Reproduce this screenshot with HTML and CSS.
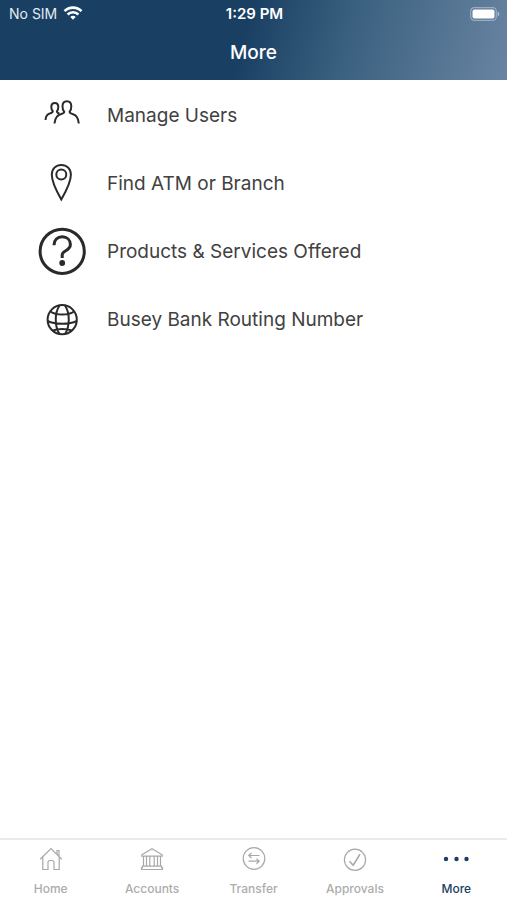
FILE: index.html
```html
<!DOCTYPE html>
<html lang="en">
<head>
  <meta charset="utf-8">
  <meta name="viewport" content="width=device-width, initial-scale=1">
  <title>More</title>
  <link rel="stylesheet" href="styles.css">
</head>
<body>
  <header class="header">
    <div class="status">
      <div class="carrier">
        <span>No SIM</span>
        <svg width="20" height="16" viewBox="0 0 20 16" fill="none" stroke="#fff" stroke-width="2.6">
          <path d="M1.500 5.200C6.200.4 13.800.4 18.500 5.200"/>
          <path d="M4.600 8.500c3-3 7.800-3 10.800 0"/>
          <path d="M10 9.800c-1.100 0-2 .4-2.700 1.100L10 13.800l2.700-2.900c-.7-.7-1.600-1.100-2.700-1.100z" fill="#fff" stroke="none"/>
        </svg>
      </div>
      <span class="time">1:29 PM</span>
      <svg class="battery" width="30" height="14" viewBox="0 0 30 14">
        <rect x=".7" y=".7" width="25.6" height="12.6" rx="3.6" fill="none" stroke="#9aadc0" stroke-width="1.2"/>
        <rect x="2.5" y="2.5" width="22" height="9" rx="2" fill="#fff"/>
        <path d="M27.600 4.500c2.400.8 2.400 4.200 0 5z" fill="#a9b9ca"/>
      </svg>
    </div>
    <h1 class="title">More</h1>
  </header>

  <main class="menu">
    <a href="#users" class="row">
      <svg class="icon" viewBox="0 0 48 48">
        <path d="M16.500 32.500c.4-5.400 2.500-8.500 6.800-9.500 1.900-.5 2.900-.9 2.900-2.200-1.200-1.200-1.700-3.200-1.700-5.600 0-3.100 1.700-5 4.400-5s4.400 1.900 4.400 5c0 2.400-.5 4.400-1.700 5.600 0 1.300 1 1.700 2.900 2.200 4.300 1 5.900 4.100 6.300 9.500"/>
        <path d="M7.500 29c.3-3.800 1.700-6 4.800-6.700 1.900-.5 2.500-.9 2.500-2-1-1-1.500-2.500-1.500-4.200 0-2.600 1.300-4.100 3.500-4.100s3.500 1.500 3.500 4.100c0 1.700-.5 3.200-1.400 4.200 0 1.100.7 1.700 2.500 2.200"/>
      </svg>
      <span>Manage Users</span>
    </a>
    <a href="#locations" class="row">
      <svg class="icon" viewBox="0 0 48 48">
        <path d="M23.300 40.500C19.500 34 13.800 23.500 13.800 15.600c0-5.700 4-9.700 9.500-9.700s9.600 4 9.600 9.700c0 7.900-5.800 18.400-9.600 24.900z"/>
        <circle cx="23.300" cy="15.400" r="5"/>
      </svg>
      <span>Find ATM or Branch</span>
    </a>
    <a href="#products" class="row">
      <svg class="icon icon-help" viewBox="0 0 48 48">
        <circle cx="24.200" cy="24.300" r="22.100"/>
        <path d="M16 18.200c0-5.200 3.400-8.400 8.200-8.400s8.200 3.200 8.200 7.800c0 6.600-8.200 5.600-8.200 10.200v3.200"/>
        <circle cx="24.200" cy="36" r="2.900" fill="#2a2a2a" stroke="none"/>
      </svg>
      <span>Products &amp; Services Offered</span>
    </a>
    <a href="#routing" class="row">
      <svg class="icon" viewBox="0 0 48 48">
        <circle cx="24.200" cy="24.700" r="14.600"/>
        <path d="M21.500 10.500c-5 7.500-5 21 0 28.500M27 10.500c5 7.500 5 21 0 28.500M12.500 16.500c5.500 4 18 4 23.500 0M9.600 26c7.500 3.600 21.700 3.600 29.200 0M15 35.500c4.500-2 14-2 18.500 0"/>
      </svg>
      <span>Busey Bank Routing Number</span>
    </a>
  </main>

  <nav class="tabs">
    <a href="#home" class="tab">
      <svg class="tab-icon" viewBox="0 0 24 24">
        <path d="M1.200 12.200 12 1.500l10.800 10.700M3.800 10v12.500h5.200v-7c0-1.200.8-2 2-2h2c1.200 0 2 .8 2 2v7h5.200V10M18 7.200V3.500h2v5.700"/>
      </svg>
      <span>Home</span>
    </a>
    <a href="#accounts" class="tab">
      <svg class="tab-icon" viewBox="0 0 24 24">
        <path d="M1.800 7.800 12 1.700l10.200 6.100v1.400H1.800zM3.500 9.200v10M6.500 9.200v10M9.800 9.200v10M14.200 9.200v10M17.500 9.200v10M20.500 9.200v10M2.500 19.200h19v1.500h1v1.800h-21v-1.800h1z"/>
      </svg>
      <span>Accounts</span>
    </a>
    <a href="#transfer" class="tab">
      <svg class="tab-icon" viewBox="0 0 24 24">
        <circle cx="12" cy="11.500" r="10.800"/>
        <path d="M17.500 8.500H7M9.500 6 6.800 8.500 9.500 11M6.500 14.200H17M14.500 11.700l2.700 2.500-2.700 2.500"/>
      </svg>
      <span>Transfer</span>
    </a>
    <a href="#approvals" class="tab">
      <svg class="tab-icon" viewBox="0 0 24 24">
        <circle cx="12" cy="12.800" r="10.600"/>
        <path d="m6.500 14.200 3.700 4L17 7.200" stroke-width="1.600"/>
      </svg>
      <span>Approvals</span>
    </a>
    <a href="#more" class="tab active" aria-current="page">
      <svg class="tab-icon dots" viewBox="0 0 28 24">
        <circle cx="4" cy="12" r="2.200"/>
        <circle cx="14.500" cy="12" r="2.200"/>
        <circle cx="24.500" cy="12" r="2.200"/>
      </svg>
      <span>More</span>
    </a>
  </nav>
</body>
</html>
```

FILE: styles.css
```css
* {
  box-sizing: border-box;
}

body {
  margin: 0;
  min-height: 100vh;
  display: flex;
  flex-direction: column;
  background-color: #fff;
  font-family: Inter, "Liberation Sans", sans-serif;
}

a {
  text-decoration: none;
}

.header {
  height: 80px;
  color: #fff;
  background: linear-gradient(105deg, #193f63 48%, #3b6180 68%, #6984a2 100%);
}

.status {
  display: grid;
  grid-template-columns: 1fr auto 1fr;
  align-items: center;
  height: 27px;
  padding: 0 7px 0 9px;
  font-size: 14px;
}

.carrier {
  display: flex;
  align-items: center;
  gap: 6px;
  color: #e4ebf2;
}

.time {
  font-size: 15px;
  font-weight: 600;
}

.battery {
  justify-self: end;
}

.title {
  margin: 0;
  font-size: 19px;
  line-height: 52px;
  font-weight: 500;
  text-align: center;
}

.menu {
  flex: 1;
  padding-top: 1px;
}

.row {
  display: flex;
  align-items: center;
  gap: 21px;
  height: 68px;
  padding: 0 38px;
  color: #414141;
  font-size: 19px;
}

.icon {
  flex: none;
  width: 48px;
  height: 48px;
  fill: none;
  stroke: #2a2a2a;
  stroke-width: 2;
}

.icon-help {
  stroke-width: 3;
}

.tabs {
  display: flex;
  height: 62px;
  border-top: 2px solid #ebebeb;
}

.tab {
  flex: 1;
  display: flex;
  flex-direction: column;
  align-items: center;
  gap: 10px;
  padding-top: 7px;
  color: #acacac;
  font-size: 12px;
  line-height: 16px;
  font-weight: 500;
}

.tab-icon {
  width: 24px;
  height: 24px;
  fill: none;
  stroke: #a8a8a8;
  stroke-width: 1.2;
}

.dots {
  width: 28px;
  fill: #193f63;
  stroke: none;
}

.active {
  color: #193f63;
}
```
